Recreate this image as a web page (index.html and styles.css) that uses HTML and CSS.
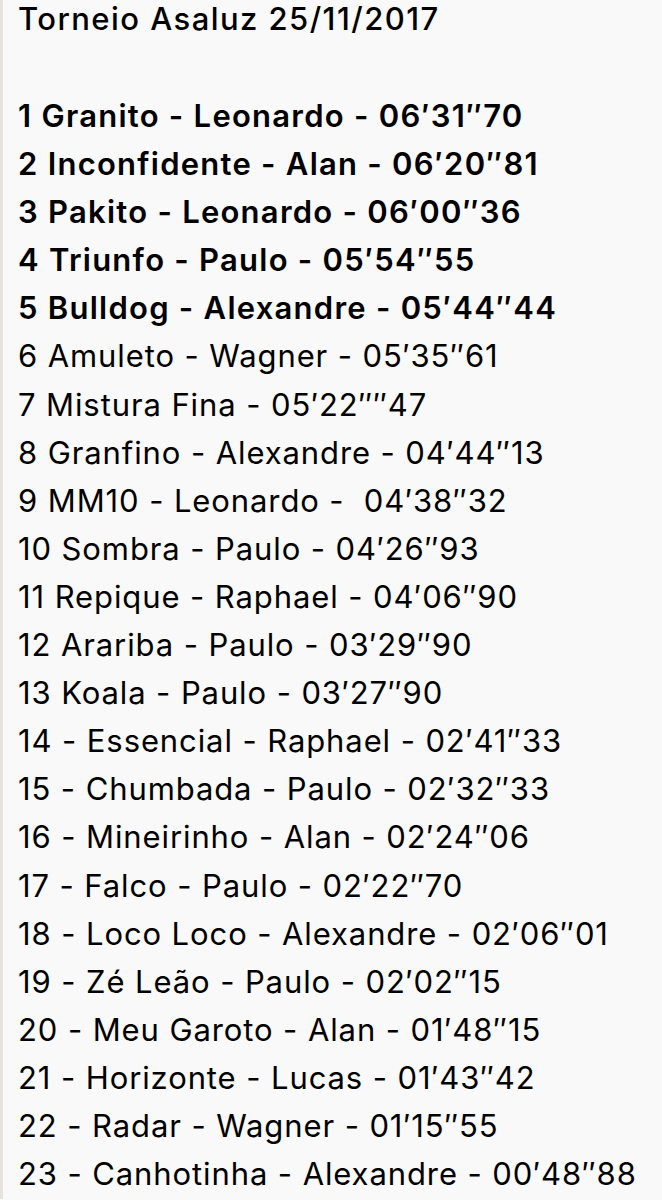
FILE: index.html
```html
<!DOCTYPE html>
<html lang="pt">
<head>
    <meta charset="UTF-8">
    <meta name="viewport" content="width=device-width, initial-scale=1.0">
    <title>Torneio Asaluz 25/11/2017</title>
    <link rel="stylesheet" href="styles.css">
</head>
<body>
    <div class="note">
        <div class="title">Torneio Asaluz 25/11/2017</div>

        <ul class="results">
            <li class="top">1 Granito - Leonardo - 06′31″70</li>
            <li class="top">2 Inconfidente - Alan - 06′20″81</li>
            <li class="top">3 Pakito - Leonardo - 06′00″36</li>
            <li class="top">4 Triunfo - Paulo - 05′54″55</li>
            <li class="top">5 Bulldog - Alexandre - 05′44″44</li>
            <li>6 Amuleto - Wagner - 05′35″61</li>
            <li>7 Mistura Fina - 05′22″″47</li>
            <li>8 Granfino - Alexandre - 04′44″13</li>
            <li>9 MM10 - Leonardo -  04′38″32</li>
            <li>10 Sombra - Paulo - 04′26″93</li>
            <li>11 Repique - Raphael - 04′06″90</li>
            <li>12 Arariba - Paulo - 03′29″90</li>
            <li>13 Koala - Paulo - 03′27″90</li>
            <li>14 - Essencial - Raphael - 02′41″33</li>
            <li>15 - Chumbada - Paulo - 02′32″33</li>
            <li>16 - Mineirinho - Alan - 02′24″06</li>
            <li>17 - Falco - Paulo - 02′22″70</li>
            <li>18 - Loco Loco - Alexandre - 02′06″01</li>
            <li>19 - Zé Leão - Paulo - 02′02″15</li>
            <li>20 - Meu Garoto - Alan - 01′48″15</li>
            <li>21 - Horizonte - Lucas - 01′43″42</li>
            <li>22 - Radar - Wagner - 01′15″55</li>
            <li>23 - Canhotinha - Alexandre - 00′48″88</li>
        </ul>
    </div>
</body>
</html>
```

FILE: styles.css
```css
body { margin: 0; background: #f9f9f9; font-family: Inter, "Noto Sans", sans-serif; color: #000; overflow: hidden; }
.note { border-left: 3px solid #e6e2dc; min-height: 1200px; padding: 0 0 0 15px; }
.title { font-size: 31px; font-weight: 500; line-height: 40px; margin-top: -1px; letter-spacing: 1.45px; }
.results { list-style: none; margin: 53px 0 0 0; padding: 0; }
.results li { font-size: 31px; line-height: 48.1px; white-space: pre; letter-spacing: 0.9px; }
.results .top { font-weight: 600; letter-spacing: 1.25px; }
```
